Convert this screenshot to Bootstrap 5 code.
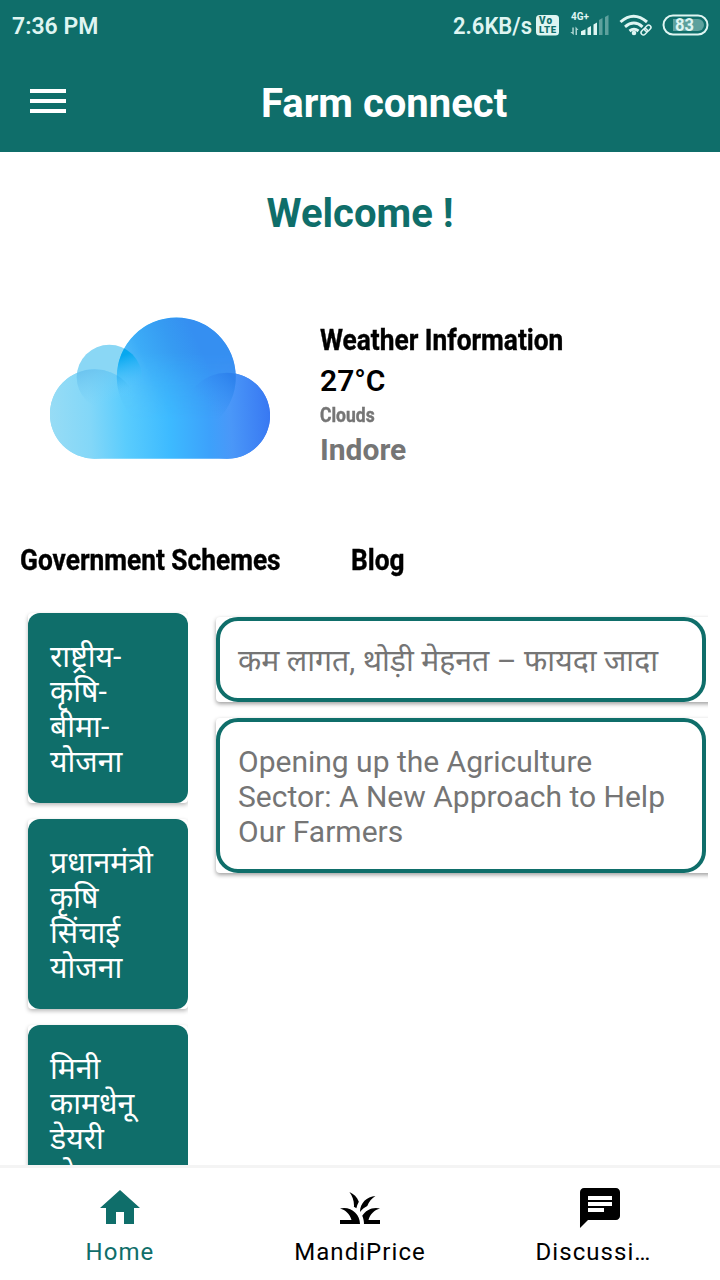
<!DOCTYPE html>
<html lang="en">
<head>
<meta charset="utf-8">
<meta name="viewport" content="width=device-width, initial-scale=1">
<title>Farm connect</title>
<link href="https://cdn.jsdelivr.net/npm/bootstrap@5.3.0/dist/css/bootstrap.min.css" rel="stylesheet">
<style>
:root{--farm:#0f6e6a}
body{font-family:Roboto,"Noto Sans Devanagari","Noto Sans",sans-serif;background:#fff;color:#000}
.app{width:720px;height:1280px}
.farm-bg{background:var(--farm)}
.farm-text{color:var(--farm)}
.status{height:52px;color:#dff5f2;font-size:23px;line-height:53px;font-weight:600}
.topbar{height:100px}
.topbar h1,.welcome{font-size:40px;font-weight:700;line-height:48px}
.topbar h1{padding-top:4px}
.welcome{padding-top:38px;height:138px}
.weather{height:200px;padding:27px 50px 0}
.cond{display:inline-block;font-weight:700;transform-origin:0 50%;transform:scaleX(.876);white-space:nowrap;-webkit-text-stroke:.4px currentColor}
.t30{font-size:30px;line-height:40px}
.muted{color:#757575}
.headings{height:85px;padding-left:20px}
.lists{height:590px}
.schemes{width:160px;margin-left:28px;gap:16px;padding-top:13px}
.tile{border-radius:12px;flex:none;height:190px;padding:26px 22px 24px;color:#fff;font-size:30.2px;line-height:35px}
.tile-shell{border-radius:4px;box-shadow:0 2px 4px rgba(0,0,0,.28)}
.clip{overflow:hidden}
.blogs{width:500px;padding:17px 0 0 8px;gap:16px}
.blog-shell{width:500px;border-radius:4px;box-shadow:0 2px 4px rgba(0,0,0,.38)}
.blog{width:490px;border:4px solid var(--farm);border-radius:22px;padding:22px 18px 20px;font-size:30px;line-height:35px;color:#757575}
.blog-hi{font-size:30.2px}
.tabs{height:115px;border-top:3px solid #f4f4f4;background:#fff;font-size:24px;letter-spacing:1.05px;line-height:28px}
.tabs a{width:240px;padding-top:16px;gap:6px;color:#000}
.tabs a.farm-text{color:var(--farm)}
</style>
</head>
<body>
<div class="app d-flex flex-column overflow-hidden">
  <header class="farm-bg">
    <div class="status d-flex justify-content-between">
      <span style="padding-left:12px">7:36 PM</span>
      <svg width="280" height="52" viewBox="440 0 280 52" font-family="Roboto,sans-serif" fill="#dff5f2">
        <text x="453" y="34" font-size="23.5" font-weight="600" textLength="79" lengthAdjust="spacingAndGlyphs">2.6KB/s</text>
        <rect x="536" y="15" width="23" height="20.500" rx="3.500"/>
        <g fill="#0f6e6a" font-weight="900"><text x="539" y="24.300" font-size="10" textLength="13">Vo</text><text x="539" y="33.300" font-size="9.500" textLength="17">LTE</text></g>
        <text x="571" y="20" font-size="10" font-weight="700" textLength="18" lengthAdjust="spacingAndGlyphs">4G+</text>
        <path d="M572.300 27.500v4.500h-2l3.500 3v-7.500zM575.500 35v-8.500l3 3.500h-1.500v5z" opacity=".75"/>
        <path d="M581 31.300l4.500-2V35H581zM587.500 28l3.500-2v9h-3.500zM593.500 24.500l3.500-2V35h-3.500z"/>
        <path d="M599 20l3.500-2V35H599zM605 17l3.500-2V35H605z" opacity=".38"/>
        <g fill="none" stroke="#dff5f2" stroke-width="3">
          <path d="M620.500 22q13-11.500 26.500 0M625 26.800q9-7.500 17.500 0M629.500 31q4.500-3.500 9 0"/>
          <g stroke-width="1.500" transform="rotate(-45 646 30)"><rect x="640" y="27.700" width="7" height="4.600" rx="2.300"/><rect x="645" y="27.700" width="7" height="4.600" rx="2.300"/></g>
        </g>
        <circle cx="634" cy="33" r="2.300"/>
        <rect x="663.500" y="15.500" width="44" height="19" rx="9.500" fill="none" stroke="#dff5f2" stroke-width="2"/>
        <path d="M673 19h25a6 6 0 0 1 0 12h-25z" opacity=".38"/>
        <text x="675" y="31" font-size="18" font-weight="700" textLength="19" lengthAdjust="spacingAndGlyphs">83</text>
      </svg>
    </div>
    <div class="topbar d-flex align-items-center">
      <svg width="36" height="24" style="margin:-2px 195px 0 30px" fill="#fff"><path d="M0 0h36v4H0zM0 10h36v4H0zM0 20h36v4H0z"/></svg>
      <h1 class="text-white mb-0">Farm connect</h1>
    </div>
  </header>

  <main>
    <h2 class="welcome farm-text text-center m-0">Welcome !</h2>
    <section class="weather d-flex">
      <svg width="220" height="142" viewBox="0 0 220 142" class="flex-shrink-0">
        <defs>
          <linearGradient id="base" gradientUnits="userSpaceOnUse" x1="0" y1="100" x2="220" y2="90">
            <stop offset="0" stop-color="#97dcf5"/><stop offset=".18" stop-color="#83d7f8"/><stop offset=".34" stop-color="#5accfd"/><stop offset=".54" stop-color="#3dbaff"/><stop offset=".72" stop-color="#3da1fb"/><stop offset=".82" stop-color="#4a97f8"/><stop offset="1" stop-color="#3878f2"/>
          </linearGradient>
          <linearGradient id="sky" gradientUnits="userSpaceOnUse" x1="72" y1="65" x2="150" y2="30">
            <stop offset="0" stop-color="#58c4fc"/><stop offset=".35" stop-color="#3cacf7"/><stop offset=".7" stop-color="#369bf2"/><stop offset="1" stop-color="#358ff1"/>
          </linearGradient>
          <linearGradient id="fade" x2="0" y2="1"><stop offset=".3" stop-color="#fff"/><stop offset=".55" stop-color="#888"/><stop offset=".85" stop-color="#000"/></linearGradient>
          <mask id="fadeMask"><circle cx="126.300" cy="60" r="59.500" fill="url(#fade)"/></mask>
          <linearGradient id="lens" gradientUnits="userSpaceOnUse" x1="74" y1="38" x2="86" y2="68"><stop offset="0" stop-color="#06a8ef"/><stop offset="1" stop-color="#4fc4fc" stop-opacity="0"/></linearGradient>
          <linearGradient id="lensLow" gradientUnits="userSpaceOnUse" x1="68" y1="58" x2="74" y2="84"><stop offset="0" stop-color="#2fb1f5"/><stop offset="1" stop-color="#5accfd" stop-opacity="0"/></linearGradient>
          <linearGradient id="lens2" gradientUnits="userSpaceOnUse" x1="42" y1="50" x2="54" y2="86"><stop offset="0" stop-color="#6cc4ef"/><stop offset="1" stop-color="#78d2f9" stop-opacity="0"/></linearGradient>
          <linearGradient id="lens3" gradientUnits="userSpaceOnUse" x1="184" y1="62" x2="158" y2="90"><stop offset="0" stop-color="#2e82ed"/><stop offset="1" stop-color="#3b98f8" stop-opacity="0"/></linearGradient>
          <clipPath id="bigClip"><circle cx="126.300" cy="60" r="59.500"/></clipPath>
          <clipPath id="leftClip"><circle cx="44.500" cy="97" r="44.700"/></clipPath>
        </defs>
        <circle cx="59.300" cy="60.300" r="32.600" fill="#8ad7f5"/>
        <path d="M44.500 52.300a44.700 44.700 0 0 0 0 89.400H177a43 43 0 1 0-20-81L100 70 80 80z" fill="url(#base)"/>
        <circle cx="44.500" cy="97" r="44.700" fill="url(#base)"/>
        <circle cx="177" cy="98.700" r="43" fill="url(#base)"/>
        <circle cx="126.300" cy="60" r="59.500" fill="url(#base)"/>
        <circle cx="126.300" cy="60" r="59.500" fill="url(#sky)" mask="url(#fadeMask)"/>
        <circle cx="59.300" cy="60.300" r="32.600" fill="url(#lens2)" clip-path="url(#leftClip)"/>
        <g clip-path="url(#bigClip)">
          <circle cx="59.300" cy="60.300" r="32.600" fill="url(#lens)"/>
          <circle cx="44.500" cy="97" r="44.700" fill="url(#lensLow)" opacity=".7"/>
          <circle cx="177" cy="98.700" r="43" fill="url(#lens3)"/>
        </g>
      </svg>
      <div style="margin-left:50px;padding-top:3px">
        <div class="t30"><span class="cond">Weather Information</span></div>
        <div class="t30" style="font-weight:600;padding-top:1px;margin-bottom:-1px">27°C</div>
        <div class="muted" style="font-size:20px;line-height:30px"><span class="cond">Clouds</span></div>
        <div class="t30 muted fw-bold">Indore</div>
      </div>
    </section>

    <section class="headings d-flex t30" style="padding-top:50px">
      <div style="width:331px"><span class="cond">Government Schemes</span></div>
      <div><span class="cond">Blog</span></div>
    </section>

    <section class="lists d-flex" style="padding-top:25px">
      <div class="clip" style="width:188px;height:565px">
        <div class="schemes d-flex flex-column">
          <div class="tile-shell"><div class="tile farm-bg">राष्ट्रीय-<br>कृषि-<br>बीमा-<br>योजना</div></div>
          <div class="tile-shell"><div class="tile farm-bg">प्रधानमंत्री<br>कृषि<br>सिंचाई<br>योजना</div></div>
          <div class="tile-shell"><div class="tile farm-bg">मिनी<br>कामधेनू<br>डेयरी<br>योजना</div></div>
        </div>
      </div>
      <div class="clip" style="width:500px;margin-left:20px;height:565px">
        <div class="blogs d-flex flex-column">
          <div class="blog-shell"><div class="blog blog-hi text-nowrap">कम लागत, थोड़ी मेहनत – फायदा जादा</div></div>
          <div class="blog-shell"><div class="blog text-nowrap">Opening up the Agriculture<br>Sector: A New Approach to Help<br>Our Farmers</div></div>
        </div>
      </div>
    </section>
  </main>

  <nav class="tabs d-flex mt-auto flex-shrink-0 position-relative">
    <a class="d-flex flex-column align-items-center text-decoration-none farm-text"><svg width="48" height="48" viewBox="0 0 24 24" fill="currentColor"><path d="M10 20v-6h4v6h5v-8h3L12 3 2 12h3v8z"/></svg><span>Home</span></a>
    <a class="d-flex flex-column align-items-center text-decoration-none"><svg width="48" height="48" viewBox="0 0 24 24" fill="currentColor"><path d="M12 20H2v-2h5.750C7.020 15.190 4.810 12.990 2 12.260 2.640 12.100 3.310 12 4 12c4.420 0 8 3.580 8 8zM22 12.260c-.64-.16-1.310-.26-2-.26-2.930 0-5.480 1.580-6.880 3.930.29.66.53 1.350.67 2.070.13.65.2 1.320.2 2H22v-2h-5.750c.73-2.810 2.940-5.010 5.750-5.740zM15.640 11.020c.78-2.090 2.230-3.840 4.090-5C15.440 6.160 12 9.670 12 14v.02c.95-1.270 2.200-2.300 3.640-3zM11.420 8.850C10.580 6.660 8.880 4.890 6.700 4 8.140 5.860 9 8.180 9 10.710c0 .21-.03.41-.04.61.43.24.83.52 1.220.82.21-1.180.65-2.290 1.240-3.290z"/></svg><span>MandiPrice</span></a>
    <a class="d-flex flex-column align-items-center text-decoration-none"><svg width="48" height="48" viewBox="0 0 24 24" fill="currentColor"><path d="M20 2H4c-1.100 0-1.990.9-1.990 2L2 22l4-4h14c1.100 0 2-.9 2-2V4c0-1.100-.9-2-2-2zM6 9h12v2H6V9zm8 5H6v-2h8v2zm4-6H6V6h12v2z"/></svg><span style="margin-right:13px">Discussi…</span></a>
  </nav>
</div>
<script src="https://cdn.jsdelivr.net/npm/bootstrap@5.3.0/dist/js/bootstrap.bundle.min.js"></script>
</body>
</html>
